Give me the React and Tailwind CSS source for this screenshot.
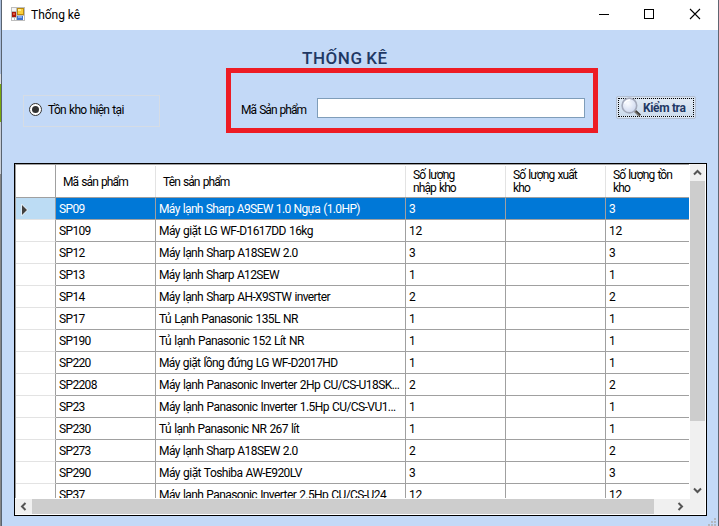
import React from "react";

const rows = [
  ["SP09", "Máy lạnh Sharp A9SEW 1.0 Ngựa (1.0HP)", "3", "tracking-[-0.64px]"],
  ["SP109", "Máy giặt LG WF-D1617DD 16kg", "12", "tracking-[-0.56px]"],
  ["SP12", "Máy lạnh Sharp A18SEW 2.0", "3", "tracking-[-0.6px]"],
  ["SP13", "Máy lạnh Sharp A12SEW", "1", "tracking-[-0.63px]"],
  ["SP14", "Máy lạnh Sharp AH-X9STW inverter", "2", "tracking-[-0.61px]"],
  ["SP17", "Tủ Lạnh Panasonic 135L NR", "1", "tracking-[-0.56px]"],
  ["SP190", "Tủ lạnh Panasonic 152 Lít NR", "1", "tracking-[-0.54px]"],
  ["SP220", "Máy giặt lồng đứng LG WF-D2017HD", "1", "tracking-[-0.62px]"],
  ["SP2208", "Máy lạnh Panasonic Inverter 2Hp CU/CS-U18SK...", "2", "tracking-[-0.57px]"],
  ["SP23", "Máy lạnh Panasonic Inverter 1.5Hp CU/CS-VU1...", "1", "tracking-[-0.57px]"],
  ["SP230", "Tủ lạnh Panasonic NR 267 lít", "1", "tracking-[-0.58px]"],
  ["SP273", "Máy lạnh Sharp A18SEW 2.0", "2", "tracking-[-0.6px]"],
  ["SP290", "Máy giặt Toshiba AW-E920LV", "3", "tracking-[-0.55px]"],
  ["SP37", "Máy lạnh Panasonic Inverter 2.5Hp CU/CS-U24", "12", "tracking-[-0.59px]"],
];

const columns = "grid grid-cols-[40px_100px_250px_100px_100px_83px]";

function FormIcon() {
  return (
    <svg width="14" height="14" viewBox="0 0 14 14" shapeRendering="crispEdges">
      <rect x="0" y="0" width="14" height="14" fill="#bdbdbd" />
      <rect x="1" y="1" width="4" height="3" fill="#f4f4f4" />
      <rect x="1" y="11" width="2" height="2" fill="#fff" />
      <rect x="4" y="11" width="1" height="2" fill="#fff" />
      <rect x="1" y="5" width="4" height="5" fill="#a8180c" />
      <rect x="2" y="6" width="2" height="2" fill="#e2563c" />
      <rect x="6" y="1" width="7" height="7" fill="#b98a10" />
      <rect x="7" y="2" width="5" height="5" fill="#fbcf3c" />
      <rect x="7" y="2" width="3" height="2" fill="#ffeb94" />
      <rect x="6" y="9" width="6" height="4" fill="#3f72cf" />
      <rect x="7" y="9" width="4" height="2" fill="#86b0f4" />
      <rect x="12" y="9" width="1" height="4" fill="#fff" />
    </svg>
  );
}

function MagnifierIcon() {
  return (
    <svg width="20" height="20" viewBox="0 0 20 20">
      <defs>
        <radialGradient id="glass" cx="0.4" cy="0.35" r="0.7">
          <stop offset="0" stopColor="#fafcff" />
          <stop offset="1" stopColor="#cbd6ee" />
        </radialGradient>
      </defs>
      <path d="M13.5 13.5 19 18.6" stroke="#77736d" strokeWidth="3" />
      <path d="M15 14 19.3 18" stroke="#3e3b38" strokeWidth="1.3" />
      <circle cx="8.4" cy="8.6" r="7.3" fill="url(#glass)" stroke="#a4aabb" strokeWidth="1.6" />
      <path d="M3.5 6.5A5.6 5.6 0 0 1 9 3.1" stroke="#fff" strokeWidth="1.4" fill="none" />
    </svg>
  );
}

function Chevron({ d }) {
  return (
    <svg width="9" height="9" viewBox="0 0 9 9" fill="none" stroke="#555" strokeWidth="2">
      <path d={d} />
    </svg>
  );
}

function TitleBar() {
  return (
    <header className="flex h-[30px] shrink-0 items-center bg-white">
      <div className="ml-[9px] mt-[-2px]"><FormIcon /></div>
      <span className="ml-[6px] text-[12px] leading-[16px] tracking-[-0.02px] text-black">Thống kê</span>
      <svg className="ml-auto mr-[17px]" width="104" height="30" fill="none" stroke="#000" shapeRendering="crispEdges">
        <path d="M2 14.5h10M47.500 9.500h9v9h-9z" />
        <path d="M93 9l10 10M103 9l-10 10" strokeWidth="1.1" shapeRendering="auto" />
      </svg>
    </header>
  );
}

function HeaderCell({ children, tall, last }) {
  return (
    <div className="flex pt-px">
      <div className={`flex flex-1 pl-[7px] ${tall ? "items-start pt-[3px]" : "items-center pt-[2px]"} ${last ? "" : "border-r border-[#e3e3e3]"}`}>
        <span className="whitespace-pre-line leading-[13px] tracking-[-0.9px] [word-spacing:1px]">{children}</span>
      </div>
    </div>
  );
}

function Row({ row, active }) {
  const cell = "flex items-center border-b border-r border-[#a0a0a0] pl-[3px] pt-px whitespace-nowrap [word-spacing:0.7px]";
  return (
    <div className={`${columns} h-[22px] shrink-0 ${active ? "text-white" : "text-black"}`}>
      <div className={`flex items-center border-b border-r border-b-[#e3e3e3] border-r-[#a0a0a0] pl-[5px] ${active ? "bg-[#bcdcf4]" : "bg-white"}`}>
        {active && (
          <svg width="8" height="12" viewBox="0 0 8 12" className="mt-[2px]">
            <path d="M1 1 6 6 1 11z" fill="#404040" stroke="#f6f6f6" strokeWidth="1.2" paintOrder="stroke" />
          </svg>
        )}
      </div>
      {[row[0], row[1], row[2], "", row[2]].map((text, i) => (
        <div
          key={i}
          className={`${cell} ${i === 4 ? "border-r-0" : ""} ${i === 1 ? row[3] : i === 0 ? "tracking-[-0.65px]" : "tracking-[-0.3px]"} ${active ? "bg-[#0078d7]" : "bg-white"}`}
        >
          {text}
        </div>
      ))}
    </div>
  );
}

function DataGrid() {
  return (
    <section className="ml-[12px] mt-[30px] flex h-[353px] w-[693px] flex-col border border-black bg-white text-[12px]">
      <div className="flex h-[335px]">
        <div className="mr-px flex h-[334px] w-[674px] flex-col overflow-hidden border-l border-t border-[#a0a0a0]">
          <div className={`${columns} h-[33px] shrink-0 border-b border-[#a0a0a0] text-black`}>
            <div className="border-r border-[#a0a0a0]" />
            <HeaderCell>Mã sản phẩm</HeaderCell>
            <HeaderCell>Tên sản phẩm</HeaderCell>
            <HeaderCell tall>{"Số lượng\nnhập kho"}</HeaderCell>
            <HeaderCell tall>{"Số lượng xuất\nkho"}</HeaderCell>
            <HeaderCell tall last>{"Số lượng tồn\nkho"}</HeaderCell>
          </div>
          {rows.map((row, i) => <Row key={row[0]} row={row} active={i === 0} />)}
        </div>
        <div className="flex w-[15px] flex-col items-center bg-[#f0f0f0]">
          <div className="flex h-[17px] items-center"><Chevron d="M1 6.500 4.500 3 8 6.500" /></div>
          <div className="h-[240px] w-full bg-[#cdcdcd]" />
          <div className="mt-auto mb-[4px]"><Chevron d="M1 2.500 4.500 6 8 2.500" /></div>
        </div>
      </div>
      <div className="flex h-[15px] w-[690px] items-center bg-[#f0f0f0]">
        <div className="flex w-[17px] justify-center"><Chevron d="M6.500 1 3 4.500 6.500 8" /></div>
        <div className="h-full w-[622px] bg-[#cdcdcd]" />
        <div className="ml-[22px]"><Chevron d="M2.500 1 6 4.500 2.500 8" /></div>
      </div>
    </section>
  );
}

export default function App() {
  return (
    <div className="flex h-[526px] w-[719px] overflow-hidden bg-[#5e6672] font-[Roboto,sans-serif] text-[12px]">
      <div className="flex w-[2px] shrink-0 flex-col border-r border-[#59636f]">
        <div className="h-[74px] bg-[#a9bddb]" />
        <div className="h-[10px] bg-[#d9dde2]" />
        <div className="h-[38px] bg-[#78a80c]" />
        <div className="h-[52px] bg-[#c9ced6]" />
        <div className="flex-1 bg-[#858585]" />
      </div>
      <main className="relative flex w-[716px] flex-col bg-[#c3d9f7]">
        <TitleBar />
        <h1 className="ml-[300px] mt-[18px] h-[20px] whitespace-nowrap text-[17px] leading-[20px] font-medium tracking-[0.55px] [word-spacing:-1px] text-[#1f3864]">THỐNG KÊ</h1>
        <div className="flex h-[65px]">
          <div className="ml-[21px] mt-[27px] flex h-[32px] w-[137px] items-center border border-[#d5dce5] pb-[3px] pl-[5px]">
            <span className="flex size-[13px] items-center justify-center rounded-full border border-[#333] bg-white">
              <span className="size-[7px] rounded-full bg-[#333]" />
            </span>
            <span className="ml-[6px] mt-px tracking-[-0.7px] [word-spacing:0.8px] text-black">Tồn kho hiện tại</span>
          </div>
          <div className="ml-[66px] flex h-[65px] w-[372px] items-center border-[5px] border-[#ed1c24] pl-[10px] pt-[15px]">
            <label className="w-[76px] pt-[4px] tracking-[-0.95px] [word-spacing:1px] text-black">Mã Sản phẩm</label>
            <div className="h-[20px] w-[268px] border border-[#7f9db9] bg-white" />
          </div>
          <button className="ml-[18px] mt-[28px] flex h-[23px] w-[80px] rounded-[2px] border border-[#b3bfd2] bg-[#d9e4f1] p-px">
            <span className="flex h-[19px] w-[76px] items-center border border-dotted border-black bg-gradient-to-b from-[#dfe9f5] to-[#cddcec]">
              <span className="ml-[2px] mt-[-1px] shrink-0"><MagnifierIcon /></span>
              <span className="ml-[2px] mt-px whitespace-nowrap font-bold tracking-[-0.35px] text-[#1f3864]">Kiểm tra</span>
            </span>
          </button>
        </div>
        <DataGrid />
        <svg className="absolute right-[2px] bottom-0" width="8" height="8" fill="#b3b8c0" shapeRendering="crispEdges">
          <path d="M6 0h2v2H6zM3 3h2v2H3zM6 3h2v2H6zM0 6h2v2H0zM3 6h2v2H3zM6 6h2v2H6z" />
        </svg>
      </main>
    </div>
  );
}
